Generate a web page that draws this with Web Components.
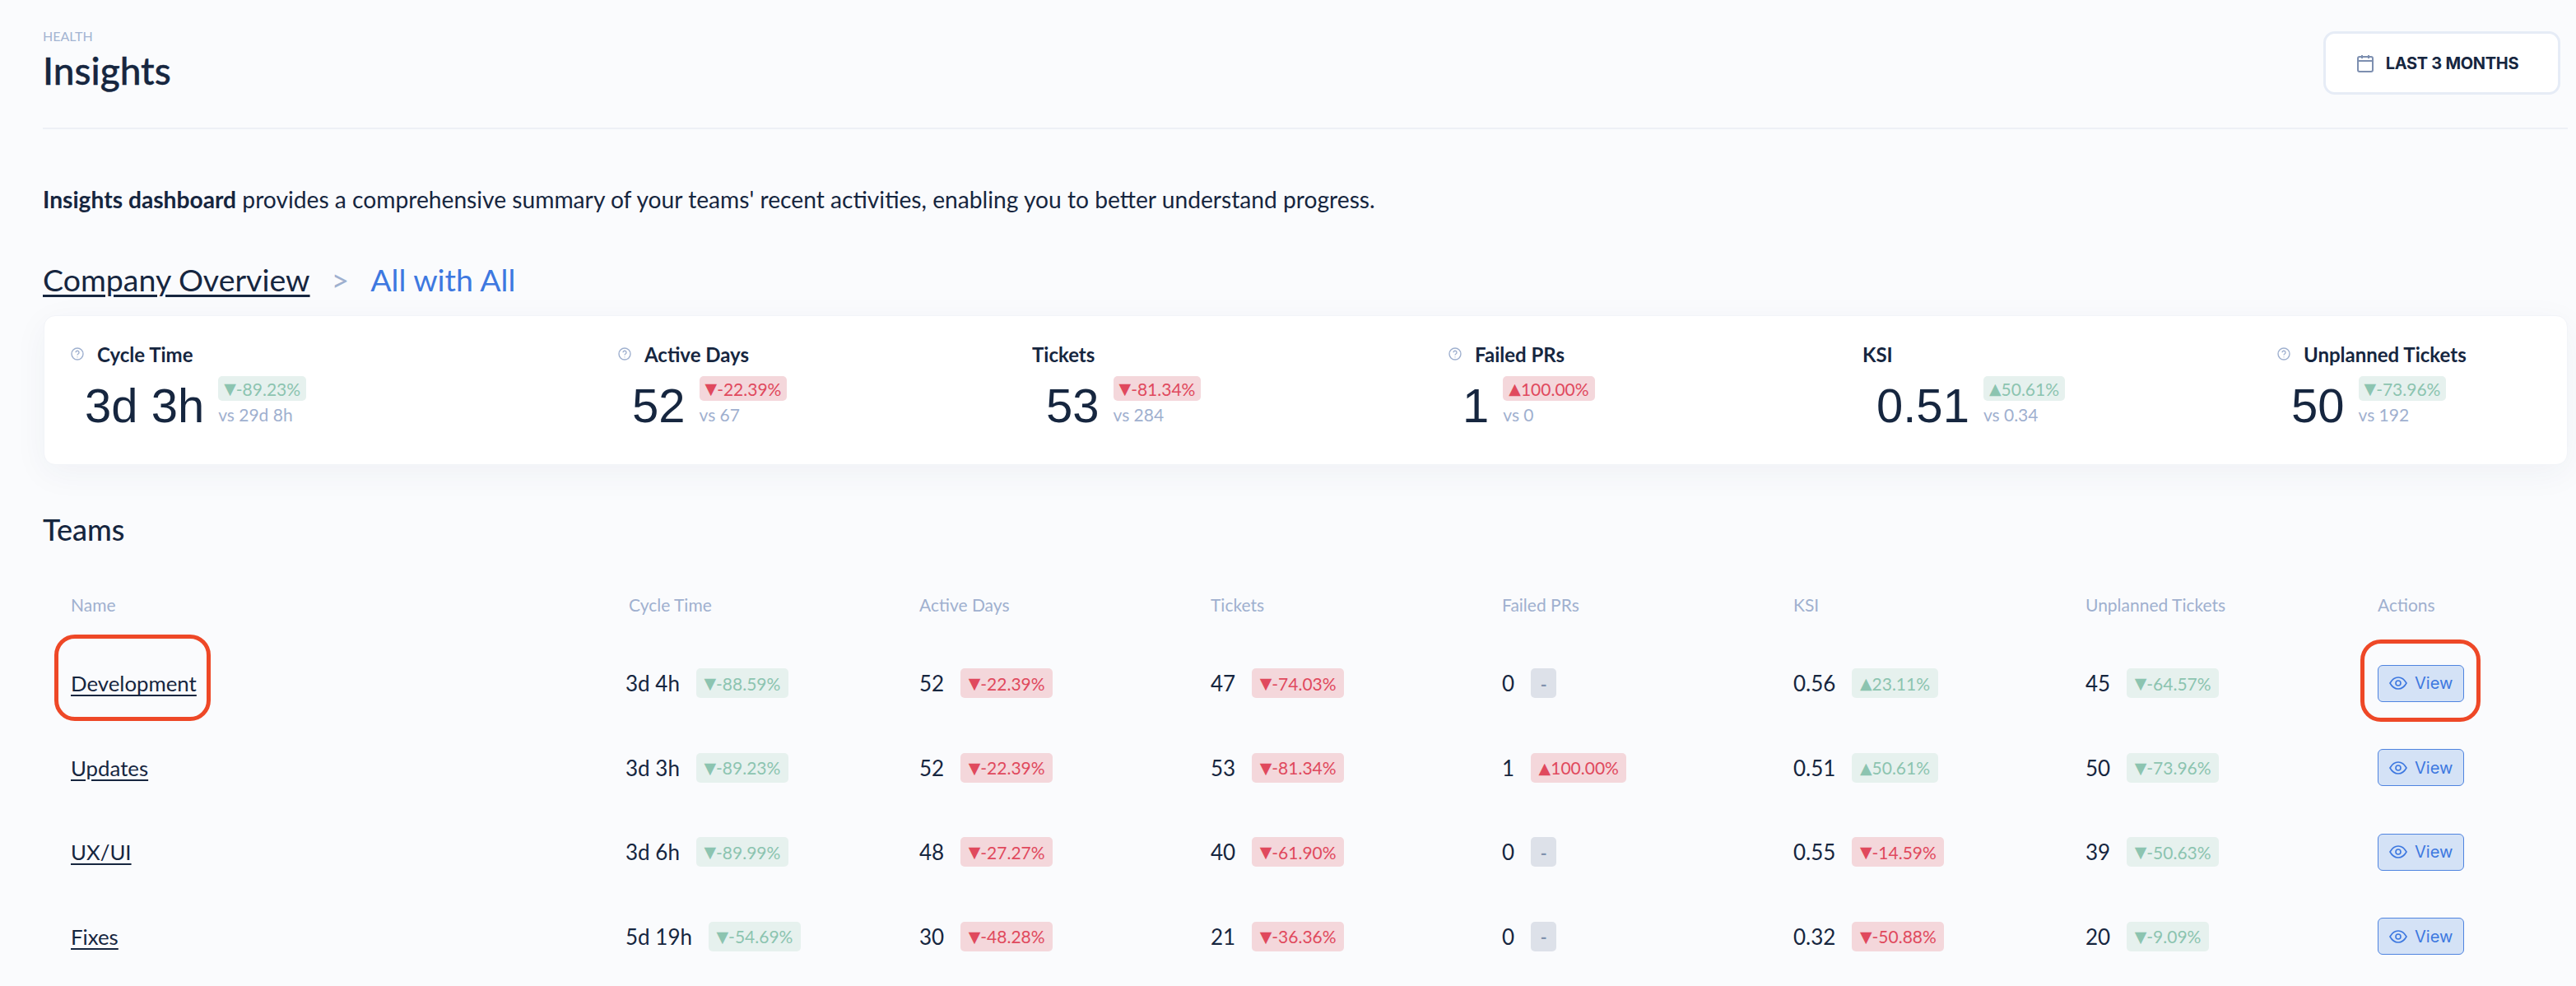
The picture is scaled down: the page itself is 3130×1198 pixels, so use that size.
<!DOCTYPE html>
<html><head><meta charset="utf-8"><style>
html,body{margin:0;background:#fafbfd;}
body{font-family:Lato,"Liberation Sans",sans-serif;color:#16263f;height:1198px;overflow:hidden;}
</style></head><body>
<insights-page></insights-page>
<template id="page-t"><style>
:host{display:block;padding:34px 10px 0 52px;}
.head{display:flex;justify-content:space-between;align-items:flex-start;height:121px;border-bottom:2px solid #edf0f6;}
.crumb{font-size:16px;line-height:20px;color:#a3b4d2;text-transform:uppercase;}
h1{margin:5px 0 0;font-size:46px;line-height:54px;font-weight:500;-webkit-text-stroke:.4px #16263f;}
.range{margin:4px 9px 0 0;width:288px;height:77px;box-sizing:border-box;border:3px solid #e6ecf6;border-radius:14px;background:#fff;display:flex;align-items:center;justify-content:center;gap:15px;padding-right:10px;font:700 20px Inter,sans-serif;letter-spacing:-.3px;}
.range svg{width:20px;height:22px;}
p{margin:67px 0 0;font-size:28.2px;line-height:36px;}
.crumbs{display:flex;align-items:baseline;margin-top:56px;font-size:37.5px;line-height:48px;}
.crumbs u{text-underline-offset:4px;text-decoration-thickness:3px;}
.sep{color:#9fb0cf;margin:0 26px 0 26px;}
.cur{color:#3d78e0;}
h2{margin:56px 0 0;font-size:36px;line-height:44px;font-weight:500;}
</style>
<div class="head"><div><div class="crumb">Health</div><h1>Insights</h1></div>
<div class="range"><svg viewBox="0 0 20 22" fill="none" stroke="#7d8fb0" stroke-width="2"><rect x="1" y="3" width="18" height="18" rx="2"/><path d="M1 8h18M6 1v4M14 1v4"/></svg>LAST 3 MONTHS</div></div>
<p><b>Insights dashboard</b> provides a comprehensive summary of your teams' recent activities, enabling you to better understand progress.</p>
<div class="crumbs"><u>Company Overview</u><span class="sep">&gt;</span><span class="cur">All with All</span></div>
<overview-card></overview-card>
<h2>Teams</h2>
<teams-table></teams-table>
</template>
<script>
const q='<svg viewBox="0 0 16 16" width="16" height="16" fill="none" stroke="#9fb0cf" stroke-width="1.4"><circle cx="8" cy="8" r="7"/><path d="M6 6.3a2 2 0 1 1 3 1.7c-.7.4-1 .8-1 1.6M8 11.4v.8"/></svg>';
const eye='<svg viewBox="0 0 22 16" width="22" height="16" fill="none" stroke="#3d78e0" stroke-width="1.6"><path d="M1 8c2.500-4.500 6-7 10-7s7.500 2.500 10 7c-2.500 4.500-6 7-10 7S3.500 12.500 1 8z"/><circle cx="11" cy="8" r="3"/></svg>';
function def(name,tpl){customElements.define(name,class extends HTMLElement{connectedCallback(){if(this.shadowRoot)return;const s=this.attachShadow({mode:'open'});s.innerHTML=tpl(this);}});}
def('insights-page',()=>document.getElementById('page-t').innerHTML);
def('delta-pill',e=>{const k=e.getAttribute('k'),t=e.getAttribute('t');const m=t.match(/^([▼▲])(.*)$/);const big=e.hasAttribute('big');
return `<style>:host{display:inline-flex;align-items:center;justify-content:center;min-width:31px;height:${big?30:36}px;padding:0 ${big?7:9.500}px;border-radius:5px;font:21px Lato,sans-serif;white-space:nowrap;box-sizing:border-box;}
:host([k=g]){background:#e6f1ee;color:#8cc4b0;}:host([k=r]){background:#f4d7db;color:#e0495d;}:host([k=n]){background:#dde1e9;color:#8091ad;font-weight:700;}
i{font:19px "DejaVu Sans",sans-serif;}</style>${m?`<i>${m[1]}</i>${m[2]}`:t}`;});
def('stat-item',e=>{const a=n=>e.getAttribute(n);return `<style>:host{display:block;}
.l{display:flex;align-items:center;gap:16px;height:30px;font-size:24px;font-weight:700;white-space:nowrap;}
.v{display:flex;margin:12px 0 0 17px;gap:17px;align-items:flex-start;}
.n{font-size:58px;line-height:72px;font-family:"Liberation Sans",sans-serif;white-space:nowrap;}
.s{font-size:21px;line-height:26px;color:#9fb0cf;margin-top:4px;}
.c{display:flex;flex-direction:column;align-items:flex-start;margin-top:0;}
</style><div class="l">${a('q')!==null?q:''}<span>${a('l')}</span></div><div class="v"><div class="n">${a('v')}</div><div class="c"><delta-pill big k="${a('k')}" t="${a('d')}"></delta-pill><div class="s">${a('s')}</div></div></div>`;});
def('overview-card',()=>{const S=[['Cycle Time','3d 3h','g','▼-89.23%','vs 29d 8h',1],['Active Days','52','r','▼-22.39%','vs 67',1],['Tickets','53','r','▼-81.34%','vs 284',0],['Failed PRs','1','r','▲100.00%','vs 0',1],['KSI','0.51','g','▲50.61%','vs 0.34',0],['Unplanned Tickets','50','g','▼-73.96%','vs 192',1]];
return `<style>:host{display:grid;grid-template-columns:665px 503px 506px 503px 504px 1fr;margin:19px 0 0 1px;height:182px;box-sizing:border-box;padding:31px 0 0 32px;background:#fff;border-radius:14px;border:1px solid #f2f4f8;box-shadow:0 10px 40px rgba(40,60,100,.05);}</style>`+S.map(s=>`<stat-item l="${s[0]}" v="${s[1]}" k="${s[2]}" d="${s[3]}" s="${s[4]}" ${s[5]?'q':''}></stat-item>`).join('');});
def('teams-table',()=>{const H=['Name','Cycle Time','Active Days','Tickets','Failed PRs','KSI','Unplanned Tickets','Actions'];
const R=[['Development',['3d 4h','g','▼-88.59%'],['52','r','▼-22.39%'],['47','r','▼-74.03%'],['0','n','-'],['0.56','g','▲23.11%'],['45','g','▼-64.57%']],
['Updates',['3d 3h','g','▼-89.23%'],['52','r','▼-22.39%'],['53','r','▼-81.34%'],['1','r','▲100.00%'],['0.51','g','▲50.61%'],['50','g','▼-73.96%']],
['UX/UI',['3d 6h','g','▼-89.99%'],['48','r','▼-27.27%'],['40','r','▼-61.90%'],['0','n','-'],['0.55','r','▼-14.59%'],['39','g','▼-50.63%']],
['Fixes',['5d 19h','g','▼-54.69%'],['30','r','▼-48.28%'],['21','r','▼-36.36%'],['0','n','-'],['0.32','r','▼-50.88%'],['20','g','▼-9.09%']]];
const cols='grid-template-columns:674px 357px 354px 354px 354px 355px 355px 1fr';
return `<style>:host{display:block;margin-top:56px;position:relative;}
.r{display:grid;${cols};align-items:center;height:102.500px;padding-left:34px;}
.h{height:26px;font-size:21px;color:#9fb0cf;margin-bottom:32px;}
.h div:nth-child(2){padding-left:4px}
.nm{font-size:25.800px;}u{text-underline-offset:4px;text-decoration-thickness:2px;}
.c{display:flex;align-items:center;gap:20px;font-size:26px;white-space:nowrap;}
.btn{display:inline-flex;align-items:center;gap:9px;width:105px;height:45px;box-sizing:border-box;padding-left:13px;border:1.5px solid #4f84e0;border-radius:6px;background:#d4e2f6;color:#3d78e0;font:20px Inter,sans-serif;}
.ring{position:absolute;border:5px solid #ee4827;border-radius:25px;box-sizing:border-box;pointer-events:none;}
</style><div class="r h">${H.map(h=>`<div>${h}</div>`).join('')}</div>`+R.map(r=>`<div class="r"><div class="nm"><u>${r[0]}</u></div>${r.slice(1).map(c=>`<div class="c"><span>${c[0]}</span><delta-pill k="${c[1]}" t="${c[2]}"></delta-pill></div>`).join('')}<div><span class="btn">${eye}View</span></div></div>`).join('')+`<div class="ring" style="left:14px;top:50px;width:190px;height:105px"></div><div class="ring" style="left:2816px;top:56px;width:146px;height:100px"></div>`;});
</script>
</body></html>
